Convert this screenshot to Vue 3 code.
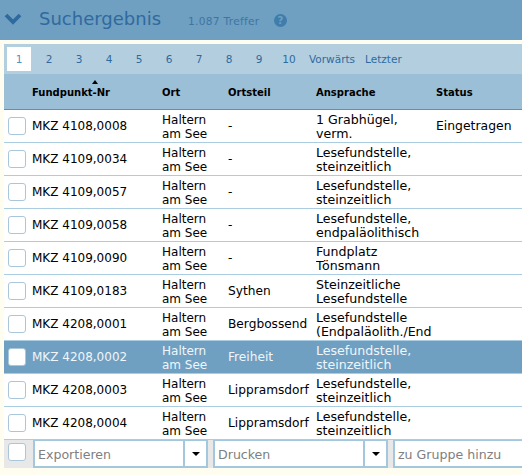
<script setup>
const pages = [1, 2, 3, 4, 5, 6, 7, 8, 9, 10]
const rows = [
  { nr: 'MKZ 4108,0008', teil: '-', an: ['1 Grabhügel,', 'verm.'], status: 'Eingetragen' },
  { nr: 'MKZ 4109,0034', teil: '-', an: ['Lesefundstelle,', 'steinzeitlich'] },
  { nr: 'MKZ 4109,0057', teil: '-', an: ['Lesefundstelle,', 'steinzeitlich'] },
  { nr: 'MKZ 4109,0058', teil: '-', an: ['Lesefundstelle,', 'endpaläolithisch'] },
  { nr: 'MKZ 4109,0090', teil: '-', an: ['Fundplatz', 'Tönsmann'] },
  { nr: 'MKZ 4109,0183', teil: 'Sythen', an: ['Steinzeitliche', 'Lesefundstelle'] },
  { nr: 'MKZ 4208,0001', teil: 'Bergbossend', an: ['Lesefundstelle', '(Endpaläolith./End'] },
  { nr: 'MKZ 4208,0002', teil: 'Freiheit', an: ['Lesefundstelle,', 'steinzeitlich'], sel: true },
  { nr: 'MKZ 4208,0003', teil: 'Lippramsdorf', an: ['Lesefundstelle,', 'steinzeitlich'] },
  { nr: 'MKZ 4208,0004', teil: 'Lippramsdorf', an: ['Lesefundstelle,', 'steinzeitlich'] }
]
</script>

<template>
  <div class="page">
    <header class="top">
      <svg class="chev" width="18" height="12" viewBox="0 0 18 12"><path d="M2 2 L9 9 L16 2" fill="none" stroke="#2f6a9e" stroke-width="3.8" /></svg>
      <span class="title">Suchergebnis</span>
      <span class="hits">1.087 Treffer</span>
      <span class="help">?</span>
    </header>
    <div class="panel">
      <nav class="pager">
        <span v-for="p in pages" :key="p" class="pg" :class="{ cur: p === 1 }">{{ p }}</span>
        <span class="pl first">Vorwärts</span>
        <span class="pl">Letzter</span>
      </nav>
      <div class="row head">
        <div class="c0"></div>
        <div class="c1 sorted">Fundpunkt-Nr<i class="arrow"></i></div>
        <div class="c2">Ort</div>
        <div class="c3">Ortsteil</div>
        <div class="c4">Ansprache</div>
        <div class="c5">Status</div>
      </div>
      <div v-for="r in rows" :key="r.nr" class="row item" :class="{ sel: r.sel }">
        <div class="c0"><span class="box"></span></div>
        <div class="c1">{{ r.nr }}</div>
        <div class="c2 two">Haltern<br />am See</div>
        <div class="c3">{{ r.teil }}</div>
        <div class="c4 two">{{ r.an[0] }}<br />{{ r.an[1] }}</div>
        <div class="c5">{{ r.status }}</div>
      </div>
      <div class="foot">
        <div class="fbox"><span class="box"></span></div>
        <div class="combo">
          <span class="txt">Exportieren</span>
          <span class="btn"><i class="down"></i></span>
        </div>
        <div class="combo">
          <span class="txt">Drucken</span>
          <span class="btn"><i class="down"></i></span>
        </div>
        <div class="combo last">
          <span class="txt">zu Gruppe hinzu</span>
        </div>
      </div>
    </div>
  </div>
</template>

<style>
html, body { margin: 0; background: #fffdf0; }
</style>

<style scoped>
.page { width: 522px; height: 475px; overflow: hidden; background: #fffdf0; font-family: "DejaVu Sans", Verdana, sans-serif; }
.top { height: 40px; background: #6f9fc1; display: flex; align-items: center; box-sizing: border-box; padding-left: 4px; }
.chev { margin: 0 17px 2px 0; }
.title { font-size: 18px; color: #2f6a9e; width: 149px; padding-bottom: 4px; }
.hits { font-size: 10.6px; color: #3f75a3; letter-spacing: 0.3px; width: 86px; padding-top: 1px; }
.help { width: 13px; height: 13px; border-radius: 50%; background: #3f7dab; color: #6f9fc1; font-size: 10px; font-weight: bold; text-align: center; line-height: 13px; }
.panel { margin: 4px 0 0 4px; background: #fff; }
.pager { height: 30px; background: #b3cfdf; display: flex; align-items: center; box-sizing: border-box; padding-left: 3px; font-size: 10.5px; color: #2f6a9e; }
.pg { width: 30px; text-align: center; line-height: 24px; }
.pg.cur { width: 24px; height: 24px; background: #fff; margin-right: 3px; color: #4f93c4; }
.pl { margin-left: 10px; }
.pl.first { margin-left: 5px; }
.row { display: flex; font-size: 12px; line-height: 14px; color: #000; }
.head { height: 36px; background: #9bbfd6; border-bottom: 1px solid #5f8fb2; box-sizing: border-box; font-size: 10px; font-weight: bold; align-items: center; padding-top: 3px; }
.item { height: 33px; border-bottom: 1px solid #abcde2; box-sizing: border-box; align-items: center; background: #fff; }
.item.sel { background: #6f9fc1; color: #f0f6fa; border-bottom-color: #abcde2; }
.c0 { width: 28px; display: flex; padding-left: 4px; box-sizing: border-box; }
.c1 { width: 130px; position: relative; }
.c2 { width: 66px; }
.c3 { width: 88px; font-size: 12.2px; }
.c4 { width: 120px; white-space: nowrap; font-size: 12.6px; }
.c5 { flex: 1; white-space: nowrap; font-size: 12.4px; }
.head .c3, .head .c4, .head .c5 { font-size: 10px; }
.item .two { overflow: hidden; padding-top: 2px; }
.box { display: block; width: 18px; height: 18px; box-sizing: border-box; background: #fff; border: 1px solid #a9c6da; border-radius: 3px; }
.arrow { position: absolute; left: 60px; top: -6px; border: 3px solid transparent; border-top: 0; border-bottom: 4px solid #000; }
.foot { height: 28px; background: #e8e8e8; display: flex; gap: 5px; font-size: 12.6px; }
.fbox { width: 24px; padding: 3px 0 0 4px; box-sizing: border-box; }
.combo { width: 175px; flex: none; background: #fff; box-sizing: border-box; border: 2px solid #a3c8de; border-top-width: 1px; display: flex; color: #808080; }
.combo.last { flex: 1; width: auto; border-right: 0; overflow: hidden; white-space: nowrap; }
.txt { flex: 1; padding: 1px 0 0 3px; display: flex; align-items: center; }
.btn { width: 21px; border-left: 2px solid #a3c8de; display: flex; align-items: center; justify-content: center; }
.down { border: 4px solid transparent; border-bottom: 0; border-top: 4px solid #000; }
</style>
